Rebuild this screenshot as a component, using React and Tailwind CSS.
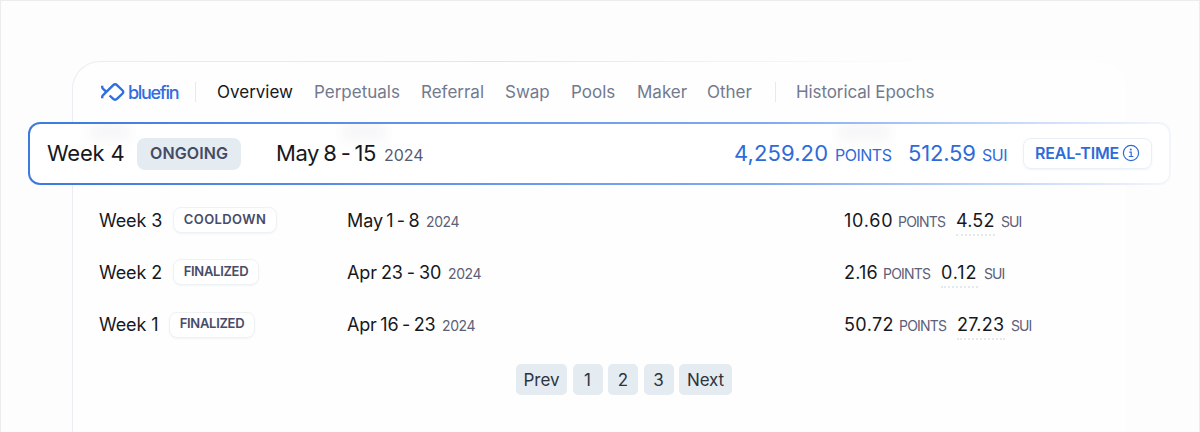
const navItems = [
  { label: "Overview", className: "w-[97px] text-[#16181d]" },
  { label: "Perpetuals", className: "w-[107px]" },
  { label: "Referral", className: "w-[84px]" },
  { label: "Swap", className: "w-[66px]" },
  { label: "Pools", className: "w-[66px]" },
  { label: "Maker", className: "w-[70px]" },
  { label: "Other", className: "w-[68px]" },
];

const weeks = [
  {
    week: "Week 3",
    status: "COOLDOWN",
    dates: "May 1 - 8",
    points: "10.60",
    sui: "4.52",
    weekClass: "w-[74px]",
    badgeClass: "w-[104px] tracking-[0.4px]",
    datesClass: "w-[79px] tracking-[-0.1px] [word-spacing:-1.6px]",
    pointsClass: "w-[54px] tracking-[0.8px]",
    suiClass: "w-[39px] tracking-[0.2px]",
  },
  {
    week: "Week 2",
    status: "FINALIZED",
    dates: "Apr 23 - 30",
    points: "2.16",
    sui: "0.12",
    weekClass: "w-[74px]",
    badgeClass: "w-[86px] tracking-[-0.3px]",
    datesClass: "w-[101px] tracking-[-0.1px] [word-spacing:-1px]",
    pointsClass: "w-[39px] tracking-[0.2px]",
    suiClass: "w-[37px] tracking-[0.9px]",
  },
  {
    week: "Week 1",
    status: "FINALIZED",
    dates: "Apr 16 - 23",
    points: "50.72",
    sui: "27.23",
    weekClass: "w-[70px]",
    badgeClass: "w-[86px] tracking-[-0.3px]",
    datesClass: "w-[95px] tracking-[-0.2px] [word-spacing:-1.2px]",
    pointsClass: "w-[55px] tracking-[0.4px]",
    suiClass: "w-[48px] tracking-[0.2px]",
  },
];

const pages = [
  { label: "Prev", className: "w-[51px]" },
  { label: "1", className: "w-[30px]" },
  { label: "2", className: "w-[30px]" },
  { label: "3", className: "w-[30px]" },
  { label: "Next", className: "w-[53px] tracking-[-0.1px]" },
];

const Logo = () => (
  <div className="flex items-center w-[95px] text-[#2f6fdf]">
    <svg className="ml-px" width="24" height="18" viewBox="0 0 24 18" fill="none">
      <path
        d="M1.200 2.800v1.200c0 .8.300 1.300.9 1.800L5.600 9M1.200 15.200v-1.200c0-.8.300-1.300.9-1.800L12 2.300a3 3 0 0 1 4.200 0l5.400 5.200a2.100 2.100 0 0 1 0 3L16.200 15.700a3 3 0 0 1-4.200 0L8.600 12.500"
        stroke="currentColor"
        strokeWidth="2.400"
      />
    </svg>
    <span className="ml-[3px] text-[18px] font-medium tracking-[-1.3px]">
      bluefin
    </span>
  </div>
);

const Divider = () => <div className="w-px h-5 bg-[#e6e9ef]" />;

const InfoIcon = () => (
  <svg width="18" height="18" viewBox="0 0 18 18" fill="none">
    <circle cx="9" cy="9" r="7.600" stroke="currentColor" strokeWidth="1.200" />
    <circle cx="8.800" cy="5.500" r="1" fill="currentColor" />
    <path
      d="M7.200 8.200H9.200V12.500M6.800 12.500H11.400"
      stroke="currentColor"
      strokeWidth="1.200"
    />
  </svg>
);

const CurrentWeek = () => (
  <div className="relative -ml-[45px] w-[1143px] h-[63px] shrink-0 p-[2px] rounded-[12px] bg-linear-to-r from-[#3b7ae0] via-[#82aaf3] via-65% to-[#f3f6fc]">
    <div className="relative flex items-center h-full rounded-[10px] bg-white overflow-hidden pl-[17px] pr-[17px]">
      <div className="absolute left-[60px] top-0 w-[40px] h-[16px] bg-gray-400/10 blur-[7px]" />
      <div className="absolute left-[312px] top-0 w-[44px] h-[16px] bg-gray-400/10 blur-[7px]" />
      <div className="absolute left-[808px] top-0 w-[52px] h-[16px] bg-gray-400/10 blur-[7px]" />

      <span className="relative w-[90px] text-[22px] tracking-[-0.2px] text-[#16181d]">
        Week 4
      </span>
      <span className="relative flex items-center justify-center w-[104px] h-8 rounded-lg bg-[#e4ebf1] pb-[2px] text-[16px] font-semibold tracking-[0.1px] text-[#454a64]">
        ONGOING
      </span>
      <span className="relative flex items-baseline ml-[35px]">
        <span className="w-[108px] text-[22px] tracking-[-0.4px] [word-spacing:-1.6px] text-[#16181d]">
          May 8 - 15
        </span>
        <span className="text-[16px] text-[#565b72]">2024</span>
      </span>

      <span className="relative flex items-baseline ml-auto text-[#2f6bd8]">
        <span className="w-[101px] text-[22px] tracking-[0.1px]">4,259.20</span>
        <span className="w-[73px] text-[16px] tracking-[-0.5px]">POINTS</span>
        <span className="w-[74px] text-[22px] tracking-[-0.2px]">512.59</span>
        <span className="w-[41px] text-[16px] tracking-[-0.5px]">SUI</span>
      </span>
      <span className="relative flex items-center justify-center gap-[3px] w-[129px] h-[31px] rounded-lg border border-[#e9eff7] pb-px shadow-xs shadow-blue-100/50 text-[16px] font-semibold tracking-[-0.2px] text-[#2f6bd8]">
        REAL-TIME
        <InfoIcon />
      </span>
    </div>
  </div>
);

const WeekRow = ({ item }) => (
  <div className="flex items-center h-[52.300px] pl-[26px]">
    <div className="flex items-center w-[248px]">
      <span className={`text-[18px] tracking-[-0.1px] ${item.weekClass}`}>
        {item.week}
      </span>
      <span
        className={`flex items-center justify-center h-[26px] rounded-lg border border-[#eef2f5] bg-white pb-px shadow-xs shadow-slate-200/40 text-[13px] font-semibold text-[#484c68] ${item.badgeClass}`}
      >
        {item.status}
      </span>
    </div>
    <div className="flex items-baseline w-[497px]">
      <span className={`text-[18px] ${item.datesClass}`}>{item.dates}</span>
      <span className="text-[14px] tracking-[-0.4px] text-[#5c6078]">2024</span>
    </div>
    <div className="flex items-baseline pt-[2px]">
      <span className={`text-[18px] ${item.pointsClass}`}>{item.points}</span>
      <span className="w-[58px] text-[14px] tracking-[-0.8px] text-[#5c6078]">
        POINTS
      </span>
      <span
        className={`mr-[6px] text-[18px] border-b-2 border-dotted border-[#e3eaee] ${item.suiClass}`}
      >
        {item.sui}
      </span>
      <span className="text-[14px] tracking-[-0.9px] text-[#5c6078]">SUI</span>
    </div>
  </div>
);

const App = () => {
  return (
    <div className="w-[1200px] h-[432px] overflow-hidden border border-b-0 border-[#ececee] bg-[#fdfdfe] font-['Inter',sans-serif] text-[#16181d] whitespace-nowrap">
      <div className="mt-[60px] ml-[71px] w-[1054px] h-[420px] pt-px pl-px rounded-t-[28px] bg-linear-to-r from-[#ebedf4] via-[#dde4fa] via-40% to-[#fdfdfe] to-80%">
        <div className="flex flex-col h-full rounded-t-[27px] bg-[#fefefe]">
          <nav className="flex items-center h-[60px] shrink-0 pl-[27px] text-[17px] text-[#727a8e]">
            <Logo />
            <Divider />
            <div className="flex ml-[21px] pt-[2px]">
              {navItems.map((item) => (
                <span key={item.label} className={item.className}>
                  {item.label}
                </span>
              ))}
            </div>
            <Divider />
            <span className="ml-5 pt-[2px] tracking-[-0.1px]">
              Historical Epochs
            </span>
          </nav>

          <CurrentWeek />

          <div className="mt-[9px]">
            {weeks.map((item) => (
              <WeekRow key={item.week} item={item} />
            ))}
          </div>

          <div className="flex gap-[5.500px] mt-[13px] ml-[443px]">
            {pages.map((page) => (
              <button
                key={page.label}
                className={`h-[31px] rounded-[5px] bg-[#e4ebf1] pt-[2px] text-[17px] text-[#2e3340] ${page.className}`}
              >
                {page.label}
              </button>
            ))}
          </div>
        </div>
      </div>
    </div>
  );
};

export default App;
